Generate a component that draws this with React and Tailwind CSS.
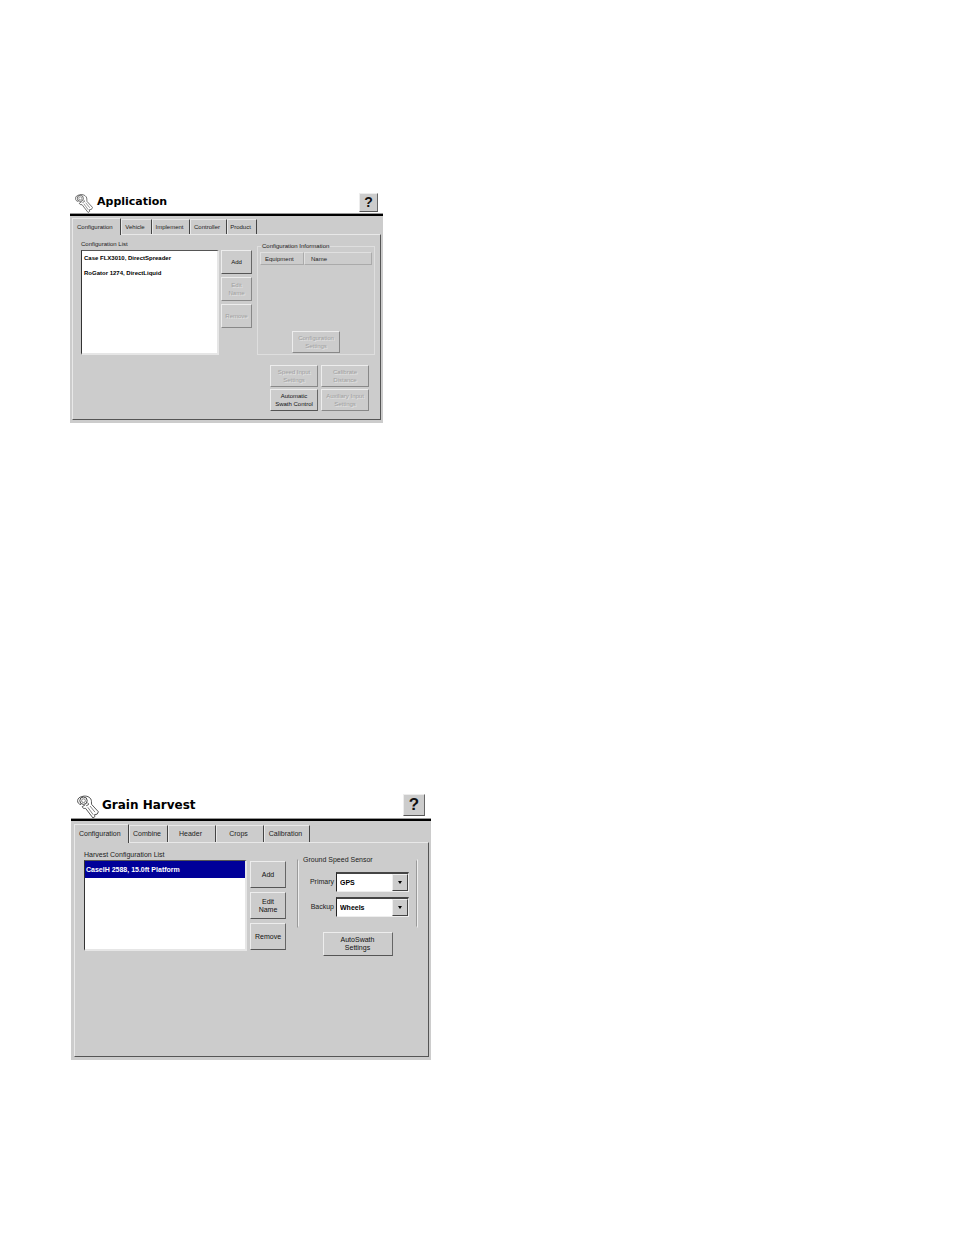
import { useState } from "react";
import clsx from "clsx";

function WrenchIcon({ className }) {
  return (
    <svg viewBox="0 0 22 24" className={className} fill="none" stroke="#444" strokeWidth="0.9" aria-hidden="true">
      <path
        d="M5 1.600C8 .4 12 1.200 13.800 4c1 1.700.5 3.600.8 5.400l6.800 7.400-1.300 2.400-2.500.4.3 2-1.900 1.400-7.400-9.600c-2 .3-3-.4-3.400-1.700l3-1.900"
        fill="#fff"
      />
      <path d="M4 9.600C1.800 9.300.5 7.600.6 5.600.7 3.500 2.500 2 5 1.600" />
      <circle cx="6.500" cy="5.700" r="3.700" fill="#fff" stroke="#333" />
      <circle cx="6.500" cy="5.700" r="1.900" stroke="#777" />
      <path d="M10.500 7.800c.8.300 1.200.9 1 1.800l-2.300 1.200" />
      <path d="m13 11 5 6.200M10.800 12.300l5.400 7.400" stroke="#777" />
    </svg>
  );
}

function Button({ className, children, ...props }) {
  return (
    <button
      type="button"
      className={clsx(
        "border border-t-[#ededed] border-l-[#ededed] border-r-[#666] border-b-[#555] bg-[#ccc] text-center text-[#111] disabled:border-r-[#888] disabled:border-b-[#888] disabled:text-[#a0a0a0] disabled:[text-shadow:1px_1px_0_#e4e4e4]",
        className
      )}
      {...props}
    >
      {children}
    </button>
  );
}

function TitleBar({ title, large }) {
  return (
    <header
      className={clsx(
        "flex items-center border-b-2 border-black bg-white shadow-[inset_0_-1px_0_#999]",
        large ? "h-[31px] gap-[3px] pr-[6px] pl-[6px]" : "h-[26px] gap-1 pr-[5px] pl-[5px]"
      )}
    >
      <WrenchIcon className={clsx("shrink-0 self-end", large ? "h-6 w-[22px]" : "h-[21px] w-[18px]")} />
      <h2
        className={clsx(
          "flex-1 font-['DejaVu_Sans',sans-serif] font-bold text-black",
          large ? "text-[12px] leading-[14px]" : "text-[11px] leading-[14px]"
        )}
      >
        {title}
      </h2>
      <Button
        aria-label="Help"
        className={clsx("shrink-0 font-bold", large ? "h-[22px] w-[22px] text-[17px] leading-[19px]" : "h-[19px] w-[19px] text-[14px] leading-[16px]")}
      >
        ?
      </Button>
    </header>
  );
}

function Tabs({ tabs, large }) {
  const [active, setActive] = useState(tabs[0].name);
  return (
    <div role="tablist" className="flex items-end">
      {tabs.map((tab) => {
        const selected = tab.name === active;
        return (
          <button
            key={tab.name}
            type="button"
            role="tab"
            aria-selected={selected}
            onClick={() => setActive(tab.name)}
            className={clsx(
              "border-t border-r border-l border-t-[#e8e8e8] border-r-[#444] border-l-[#e8e8e8] bg-[#ccc] text-[#222]",
              tab.width,
              selected ? "relative -mb-px pl-1 text-left" : "pr-[3px] text-center",
              selected ? (large ? "h-[19px]" : "h-[17px]") : large ? "h-[17px]" : "h-[15px]"
            )}
          >
            {tab.name}
          </button>
        );
      })}
    </div>
  );
}

function TabPanel({ className, children }) {
  return (
    <div
      role="tabpanel"
      className={clsx("border border-t-[#e8e8e8] border-r-[#555] border-b-[#555] border-l-[#e8e8e8]", className)}
    >
      {children}
    </div>
  );
}

function ListBox({ id, label, items, initial, className, itemClass }) {
  const [value, setValue] = useState(initial);
  return (
    <div className="flex shrink-0 flex-col">
      <span id={id} className="leading-[11px] text-[#222]">
        {label}
      </span>
      <ul
        role="listbox"
        aria-labelledby={id}
        className={clsx("border-t border-r-2 border-b-2 border-l border-t-[#555] border-r-[#e6e6e6] border-b-[#e6e6e6] border-l-[#333] bg-white font-bold", className)}
      >
        {items.map((item) => (
          <li
            key={item}
            role="option"
            tabIndex={0}
            aria-selected={item === value}
            onClick={() => setValue(item)}
            className={clsx("cursor-default whitespace-nowrap", itemClass, item === value ? "bg-[#000099] text-white" : "text-black")}
          >
            {item}
          </li>
        ))}
      </ul>
    </div>
  );
}

function SensorSelect({ id, label, options }) {
  return (
    <div className="flex items-center justify-end gap-[2px]">
      <label htmlFor={id} className="text-[#222]">
        {label}
      </label>
      <div className="relative">
        <select
          id={id}
          className="block h-[20px] w-[73px] appearance-none border border-t-2 border-t-[#444] border-r-[#eee] border-b-[#eee] border-l-[#222] bg-white pl-[3px] font-bold text-black"
        >
          {options.map((option) => (
            <option key={option}>{option}</option>
          ))}
        </select>
        <span className="pointer-events-none absolute top-[2px] right-px flex h-[17px] w-4 items-center justify-center border border-t-[#eee] border-r-[#444] border-b-[#444] border-l-[#eee] bg-[#ccc]">
          <svg viewBox="0 0 4 3" className="h-[3px] w-1" aria-hidden="true">
            <path d="M0 0h4L2 3z" fill="#000" />
          </svg>
        </span>
      </div>
    </div>
  );
}

function ApplicationScreen() {
  return (
    <section className="w-full max-w-[313px] text-[6px] leading-[8px]">
      <TitleBar title="Application" />
      <div className="bg-[#ccc] px-[2px] pt-[2px] pb-[3px]">
        <Tabs
          tabs={[
            { name: "Configuration", width: "w-[49px]" },
            { name: "Vehicle", width: "w-[31px]" },
            { name: "Implement", width: "w-[38px]" },
            { name: "Controller", width: "w-[37px]" },
            { name: "Product", width: "w-[30px]" },
          ]}
        />
        <TabPanel className="pt-1 pr-[5px] pb-2 pl-2">
          <div className="flex">
            <ListBox
              id="configuration-list"
              label="Configuration List"
              items={["Case FLX3010, DirectSpreader", "RoGator 1274, DirectLiquid"]}
              initial=""
              className="h-[105px] w-[138px]"
              itemClass="h-[15px] pl-[2px] leading-[15px]"
            />
            <div className="mt-[11px] ml-[2px] flex w-[31px] shrink-0 flex-col gap-[3px]">
              <Button className="h-6">Add</Button>
              <Button className="h-6" disabled>
                Edit
                <br />
                Name
              </Button>
              <Button className="h-6" disabled>
                Remove
              </Button>
            </div>
            <fieldset className="mt-[2px] ml-[5px] flex min-w-0 flex-1 flex-col border border-[#dedede] px-[2px] pb-px">
              <legend className="ml-px px-px leading-[11px] text-[#222]">Configuration Information</legend>
              <table className="w-full border-separate border-spacing-0">
                <thead>
                  <tr className="h-[13px]">
                    <th className="w-[44px] border border-t-[#e0e0e0] border-r-[#aaa] border-b-[#aaa] border-l-[#e0e0e0] p-0 pl-[4px] text-left font-normal text-[#222]">
                      Equipment
                    </th>
                    <th className="border border-t-[#e0e0e0] border-r-[#aaa] border-b-[#aaa] border-l-[#e0e0e0] p-0 pl-[6px] text-left font-normal text-[#222]">
                      Name
                    </th>
                  </tr>
                </thead>
              </table>
              <Button className="mx-auto mt-auto h-[22px] w-12 disabled:border-r-[#333] disabled:border-b-[#333]" disabled>
                Configuration
                <br />
                Settings
              </Button>
            </fieldset>
          </div>
          <div className="mt-[10px] mr-[6px] flex justify-end">
            <div className="grid grid-cols-[48px_48px] gap-x-[3px] gap-y-[2px]">
              <Button className="h-[22px] whitespace-nowrap" disabled>
                Speed Input
                <br />
                Settings
              </Button>
              <Button className="h-[22px] whitespace-nowrap" disabled>
                Calibrate
                <br />
                Distance
              </Button>
              <Button className="h-[22px] whitespace-nowrap">
                Automatic
                <br />
                Swath Control
              </Button>
              <Button className="h-[22px] whitespace-nowrap" disabled>
                Auxiliary Input
                <br />
                Settings
              </Button>
            </div>
          </div>
        </TabPanel>
      </div>
    </section>
  );
}

function GrainHarvestScreen() {
  return (
    <section className="ml-px w-full max-w-[360px] text-[7px] leading-[8px]">
      <TitleBar title="Grain Harvest" large />
      <div className="bg-[#ccc] pt-[3px] pr-[2px] pb-[3px] pl-[3px]">
        <Tabs
          large
          tabs={[
            { name: "Configuration", width: "w-[55px]" },
            { name: "Combine", width: "w-[39px]" },
            { name: "Header", width: "w-[48px]" },
            { name: "Crops", width: "w-[48px]" },
            { name: "Calibration", width: "w-[46px]" },
          ]}
        />
        <TabPanel className="min-h-[215px] pt-[6px] pr-[10px] pl-[9px]">
          <div className="flex items-start">
            <ListBox
              id="harvest-list"
              label="Harvest Configuration List"
              items={["CaseIH 2588, 15.0ft Platform"]}
              initial="CaseIH 2588, 15.0ft Platform"
              className="h-[91px] w-[163px]"
              itemClass="h-[17px] pl-px leading-[17px]"
            />
            <div className="mt-3 ml-[3px] flex w-9 shrink-0 flex-col gap-1">
              <Button className="h-[27px]">Add</Button>
              <Button className="h-[27px]">
                Edit
                <br />
                Name
              </Button>
              <Button className="h-[27px]">Remove</Button>
            </div>
            <div className="mt-[5px] ml-[11px] flex min-w-0 flex-1 flex-col items-stretch">
              <fieldset className="flex min-w-0 flex-col gap-[5px] border-2 border-x-[#eee] border-y-transparent pt-[7px] pr-[7px] pb-[9px] [border-style:groove]">
                <legend className="ml-1 leading-[11px] text-[#222]">Ground Speed Sensor</legend>
                <SensorSelect id="primary-sensor" label="Primary" options={["GPS", "Wheels", "Radar"]} />
                <SensorSelect id="backup-sensor" label="Backup" options={["Wheels", "GPS", "Radar"]} />
              </fieldset>
              <Button className="mx-auto mt-1 h-6 w-[70px]">
                AutoSwath
                <br />
                Settings
              </Button>
            </div>
          </div>
        </TabPanel>
      </div>
    </section>
  );
}

export default function App() {
  return (
    <main className="flex min-h-screen flex-col gap-[367px] bg-white px-[70px] pt-[190px] pb-[175px] font-['Liberation_Sans',Arial,sans-serif]">
      <ApplicationScreen />
      <GrainHarvestScreen />
    </main>
  );
}
